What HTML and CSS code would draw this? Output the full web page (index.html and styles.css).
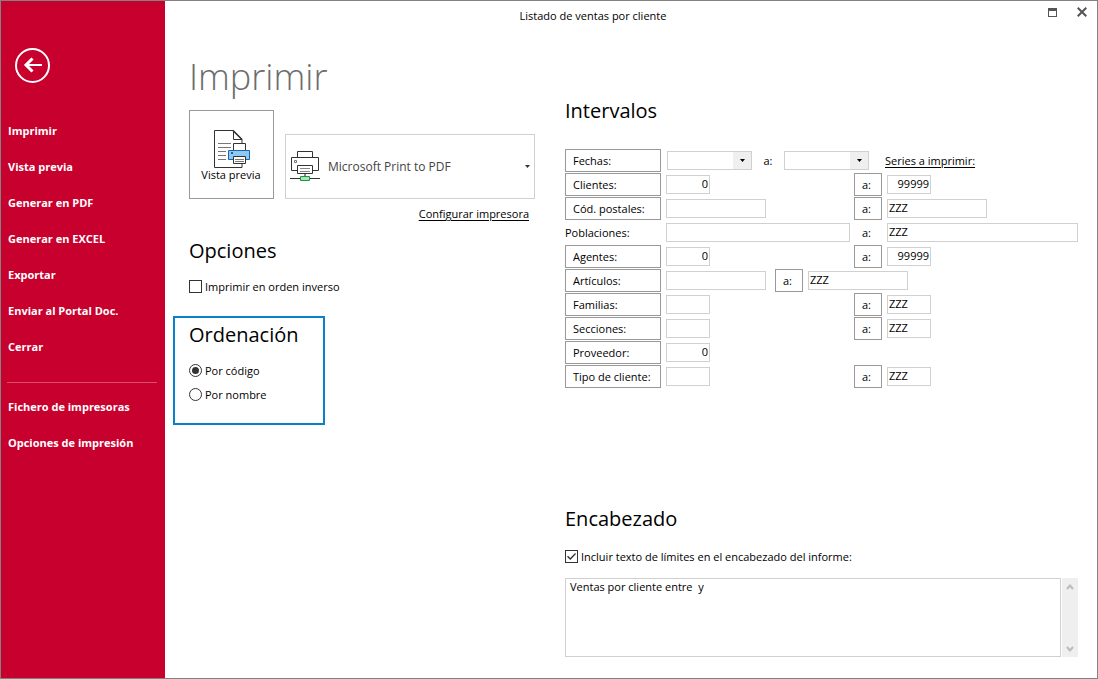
FILE: index.html
```html
<!DOCTYPE html>
<html lang="es">
<head>
<meta charset="utf-8">
<title>Listado de ventas por cliente</title>
<meta name="viewport" content="width=device-width, initial-scale=1">
<link rel="stylesheet" href="styles.css">
</head>
<body>
<div class="window">
  <aside class="sidebar">
    <button class="back" type="button" aria-label="Volver">
      <svg width="35" height="35" viewBox="0 0 35 35" fill="none" stroke="#fff">
        <circle cx="17.5" cy="17.5" r="16.5" stroke-width="2"/>
        <path d="M10 17h17" stroke-width="2"/>
        <path d="M17.500 10.500L11 17l6.500 6.500" stroke-width="3"/>
      </svg>
    </button>
    <nav class="menu">
      <a href="#imprimir">Imprimir</a>
      <a href="#vista">Vista previa</a>
      <a href="#pdf">Generar en PDF</a>
      <a href="#excel">Generar en EXCEL</a>
      <a href="#exportar">Exportar</a>
      <a href="#portal">Enviar al Portal Doc.</a>
      <a href="#cerrar">Cerrar</a>
      <hr class="divider">
      <a href="#fichero">Fichero de impresoras</a>
      <a href="#opciones">Opciones de impresión</a>
    </nav>
  </aside>

  <main class="main">
    <header class="titlebar">
      <span class="title">Listado de ventas por cliente</span>
      <div class="controls">
        <button type="button" aria-label="Maximizar">
          <svg width="10" height="10" viewBox="0 0 10 10" shape-rendering="crispEdges"><path d="M1.500 1.500h8v8h-8z" fill="none" stroke="#555"/><path d="M1 1h9v3H1z" fill="#555"/></svg>
        </button>
        <button type="button" aria-label="Cerrar ventana">
          <svg width="10" height="10" viewBox="0 0 10 10"><path d="M.7.7l8.600 8.600M9.300.7L.7 9.300" stroke="#555" stroke-width="2"/></svg>
        </button>
      </div>
    </header>

    <div class="content">
      <section class="left">
        <h1>Imprimir</h1>
        <div class="printer-row">
          <button class="preview" type="button">
            <svg width="40" height="38" viewBox="-3 0 40 38" fill="none">
              <path d="M.5.5h18.500l9 9v28H.5z" fill="#fff" stroke="#333"/>
              <path d="M19.500.5v9h8.500" stroke="#333"/>
              <path d="M19 .5l9 9" stroke="#333" stroke-width="1.500"/>
              <path d="M4 13.500h13M4 17.500h13M4 21.500h8M4 25.500h8M4 29.500h8" stroke="#777"/>
              <path d="M19.500 13.500h12v7h-12z" fill="#fff" stroke="#333"/>
              <path d="M14.500 20.500h21v9h-21z" fill="#91c8f0" stroke="#1467b3"/>
              <path d="M17 22h2v2h-2z" fill="#1467b3"/>
              <path d="M19.500 26.500h12v7h-12z" fill="#fff" stroke="#333"/>
              <path d="M21 29.500h9M21 31.500h9" stroke="#777"/>
            </svg>
            <span>Vista previa</span>
          </button>
          <div class="printer">
            <svg class="printer-icon" width="30" height="31" viewBox="0 0 30 31" fill="none">
              <path d="M7.500 6.500v-6h15v6" stroke="#333"/>
              <path d="M7.500 19.500h-6v-13h27v13h-6" fill="#fff" stroke="#333"/>
              <path d="M4.500 9.500h2v2h-2z" stroke="#777"/>
              <path d="M7.500 14.500h15v8h-15z" fill="#fff" stroke="#333"/>
              <path d="M10 17.500h10M10 20.500h10M14.500 23v2M15.500 23v2" stroke="#888"/>
              <path d="M0 27.500h10M20 27.500h10" stroke="#333"/>
              <path d="M10.500 25.500h9v4h-9z" fill="#b5dfbc" stroke="#129a45"/>
            </svg>
            <select class="printer-select" aria-label="Impresora"><option>Microsoft Print to PDF</option></select>
            <svg class="caret" width="5" height="3" viewBox="0 0 5 3"><path d="M0 0h5L2.500 3z" fill="#333"/></svg>
          </div>
        </div>
        <a class="link configure" href="#configurar">Configurar impresora</a>

        <h2>Opciones</h2>
        <label class="check inverse"><input type="checkbox"><span>Imprimir en orden inverso</span></label>

        <div class="order" role="radiogroup" aria-labelledby="orden">
          <h2 id="orden">Ordenación</h2>
          <div class="radios">
            <label class="check"><input type="radio" name="orden" checked><span>Por código</span></label>
            <label class="check"><input type="radio" name="orden"><span>Por nombre</span></label>
          </div>
        </div>
      </section>

      <section class="right">
        <h2>Intervalos</h2>
        <div class="ranges">
          <div class="line dates">
            <button class="key" type="button">Fechas:</button>
            <span class="combo"><select aria-label="Fecha inicial"><option></option></select><svg class="caret" width="5" height="3" viewBox="0 0 5 3"><path d="M0 0h5L2.500 3z"/></svg></span>
            <span class="to">a:</span>
            <span class="combo"><select aria-label="Fecha final"><option></option></select><svg class="caret" width="5" height="3" viewBox="0 0 5 3"><path d="M0 0h5L2.500 3z"/></svg></span>
            <a class="link series" href="#series">Series a imprimir:</a>
          </div>
          <div class="line">
            <button class="key" type="button">Clientes:</button>
            <input class="field short number" aria-label="Clientes desde" value="0">
            <button class="to" type="button">a:</button>
            <input class="field short number" aria-label="Clientes hasta" value="99999">
          </div>
          <div class="line">
            <button class="key" type="button">Cód. postales:</button>
            <input class="field medium" aria-label="Código postal desde">
            <button class="to" type="button">a:</button>
            <input class="field medium" aria-label="Código postal hasta" value="ZZZ">
          </div>
          <div class="line">
            <label class="key-text" for="pob">Poblaciones:</label>
            <input class="field" id="pob">
            <label class="to" for="pob2">a:</label>
            <input class="field" id="pob2" value="ZZZ">
          </div>
          <div class="line">
            <button class="key" type="button">Agentes:</button>
            <input class="field short number" aria-label="Agentes desde" value="0">
            <button class="to" type="button">a:</button>
            <input class="field short number" aria-label="Agentes hasta" value="99999">
          </div>
          <div class="line compact">
            <button class="key" type="button">Artículos:</button>
            <input class="field medium" aria-label="Artículos desde">
            <button class="to" type="button">a:</button>
            <input class="field medium" aria-label="Artículos hasta" value="ZZZ">
          </div>
          <div class="line">
            <button class="key" type="button">Familias:</button>
            <input class="field short" aria-label="Familias desde">
            <button class="to" type="button">a:</button>
            <input class="field short" aria-label="Familias hasta" value="ZZZ">
          </div>
          <div class="line">
            <button class="key" type="button">Secciones:</button>
            <input class="field short" aria-label="Secciones desde">
            <button class="to" type="button">a:</button>
            <input class="field short" aria-label="Secciones hasta" value="ZZZ">
          </div>
          <div class="line">
            <button class="key" type="button">Proveedor:</button>
            <input class="field short number" aria-label="Proveedor" value="0">
          </div>
          <div class="line">
            <button class="key" type="button">Tipo de cliente:</button>
            <input class="field short" aria-label="Tipo de cliente desde">
            <button class="to" type="button">a:</button>
            <input class="field short" aria-label="Tipo de cliente hasta" value="ZZZ">
          </div>
        </div>

        <div class="heading-block">
          <h2>Encabezado</h2>
          <label class="check limits"><input type="checkbox" checked><span>Incluir texto de límites en el encabezado del informe:</span></label>
          <div class="memo">
            <textarea aria-label="Texto del encabezado">Ventas por cliente entre  y</textarea>
            <div class="scroll" aria-hidden="true">
              <svg width="8" height="6" viewBox="0 0 8 6"><path d="M1 5l3-3.500L7 5" fill="none" stroke="#bbb" stroke-width="2"/></svg>
              <svg width="8" height="6" viewBox="0 0 8 6"><path d="M1 1l3 3.500L7 1" fill="none" stroke="#bbb" stroke-width="2"/></svg>
            </div>
          </div>
        </div>
      </section>
    </div>
  </main>
</div>
</body>
</html>
```
FILE: styles.css
```css
* {
  box-sizing: border-box;
}

body {
  margin: 0;
  font: 11px/16px "Open Sans", "Noto Sans", sans-serif;
  color: #000;
  background: #fff;
}

button,
input,
select,
textarea {
  margin: 0;
  padding: 0;
  font: inherit;
  color: inherit;
  background: #fff;
  border: 1px solid #d0d0d0;
  border-radius: 0;
}

svg {
  display: block;
}

h1,
h2 {
  margin: 0;
  font-weight: 400;
}

h1 {
  font-size: 36px;
  line-height: 50px;
  font-weight: 300;
  color: #6c6c6c;
}

h2 {
  font-size: 20px;
  line-height: 30px;
}

.window {
  display: flex;
  min-height: 100vh;
  border: 1px solid #828282;
}

.sidebar {
  flex: 0 0 164px;
  padding: 47px 8px 20px 6px;
  color: #fff;
  background: #c8002d;
}

.back {
  display: block;
  margin-left: 8px;
  background: none;
  border: 0;
}

.menu {
  display: flex;
  flex-direction: column;
  margin-top: 30px;
}

.menu a {
  height: 36px;
  padding-left: 1px;
  line-height: 36px;
  font-weight: 700;
  color: inherit;
  text-decoration: none;
}

.divider {
  width: 100%;
  height: 1px;
  margin: 17px 0 6px;
  background: #d8506d;
  border: 0;
}

.main {
  display: flex;
  flex: 1;
  flex-direction: column;
  min-width: 0;
}

.titlebar {
  display: flex;
  height: 31px;
}

.title {
  flex: 1;
  line-height: 30px;
  text-align: center;
}

.controls {
  display: flex;
  gap: 20px;
  width: 76px;
  padding: 6px 10px 0 26px;
}

.controls button {
  width: 10px;
  height: 10px;
  background: none;
  border: 0;
}

.content {
  display: flex;
  flex: 1;
  gap: 30px;
  padding: 20px 19px 21px 24px;
}

.left {
  display: flex;
  flex: 0 0 346px;
  flex-direction: column;
  align-items: flex-start;
}

.printer-row {
  display: flex;
  gap: 11px;
  align-items: flex-end;
  align-self: stretch;
  margin-top: 8px;
}

.preview {
  display: flex;
  flex-direction: column;
  align-items: center;
  width: 85px;
  height: 89px;
  padding: 19px 1px 0 0;
  line-height: 14px;
  border-color: #999;
}

.printer {
  display: grid;
  flex: 1;
  align-items: center;
  height: 65px;
}

.printer > * {
  grid-area: 1 / 1;
}

.printer-icon {
  z-index: 1;
  margin-left: 5px;
  pointer-events: none;
}

.printer-select {
  width: 100%;
  height: 65px;
  padding-left: 42px;
  font-size: 12px;
  color: #444;
  appearance: none;
}

.caret {
  z-index: 1;
  justify-self: end;
  margin-right: 5px;
  pointer-events: none;
}

.link {
  color: inherit;
  text-decoration: underline;
  text-underline-offset: 2px;
}

.configure {
  align-self: flex-end;
  margin: 7px 6px 14px 0;
}

.check {
  display: flex;
  gap: 3px;
  align-items: center;
}

.check input {
  display: grid;
  place-items: center;
  width: 13px;
  height: 13px;
  margin-bottom: 1px;
  border-color: #333;
  appearance: none;
}

.check input[type="radio"] {
  border-radius: 50%;
}

.check input[type="radio"]:checked::before {
  width: 7px;
  height: 7px;
  content: "";
  background: #333;
  border-radius: 50%;
}

.check input[type="checkbox"]:checked::before {
  width: 9px;
  height: 7px;
  content: "";
  background: #333;
  clip-path: polygon(0 52%, 12% 38%, 36% 72%, 90% 0, 100% 14%, 37% 100%);
}

.inverse {
  margin-top: 13px;
}

.order {
  width: 152px;
  margin: 21px 0 0 -16px;
  padding: 2px 14px 16px;
  border: 2px solid #0b82c8;
}

.radios {
  margin-top: 9px;
}

.radios .check {
  height: 24px;
}

.right {
  display: flex;
  flex: 1;
  flex-direction: column;
  min-width: 0;
  padding-top: 44px;
}

.ranges {
  display: grid;
  gap: 1px;
  margin-top: 23px;
}

.line {
  display: grid;
  grid-template-columns: 97px 184px 29px 1fr;
  column-gap: 4px;
  align-items: center;
  height: 23px;
}

.line.compact {
  grid-template-columns: 97px 105px 29px 1fr;
}

.line.dates {
  display: flex;
  column-gap: 0;
}

.key {
  width: 96px;
  height: 23px;
  padding-left: 7px;
  text-align: left;
  border-color: #999;
}

.to {
  width: 28px;
  padding-right: 3px;
  text-align: center;
}

button.to {
  height: 23px;
  border-color: #999;
}

.dates .to {
  width: 32px;
  padding: 0;
}

.field {
  width: 100%;
  height: 19px;
  padding: 0 1px 2px;
}

.short {
  width: 44px;
}

.medium {
  width: 100px;
}

.number {
  text-align: right;
}

.combo {
  display: grid;
  align-items: center;
  width: 85px;
}

.combo > * {
  grid-area: 1 / 1;
}

.key + .combo {
  margin-left: 6px;
}

.combo select {
  width: 100%;
  height: 19px;
  background: linear-gradient(#efefef, #efefef) right / 18px 100% no-repeat;
  appearance: none;
}

.combo .caret {
  margin-right: 7px;
}

.series {
  margin-left: 16px;
}

.heading-block {
  margin-top: auto;
}

.limits {
  margin: 15px 0 13px;
}

.memo {
  display: flex;
  gap: 1px;
}

.memo textarea {
  flex: 1;
  height: 79px;
  padding: 0 4px;
  overflow: hidden;
  resize: none;
}

.scroll {
  display: flex;
  flex-direction: column;
  justify-content: space-between;
  align-items: center;
  width: 16px;
  padding: 6px 0 5px;
  background: #efefef;
}
```
